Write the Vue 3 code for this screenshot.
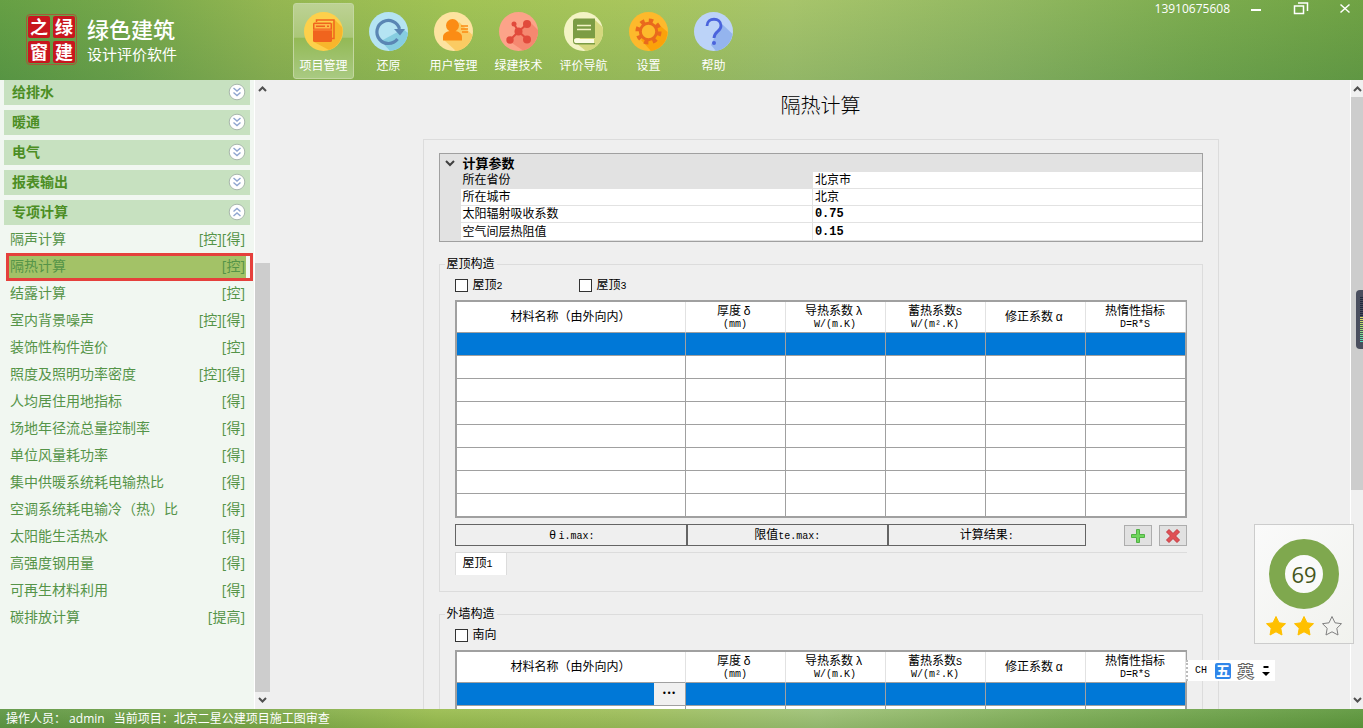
<script setup>
import { ref } from 'vue'

const tools = [
  { id: 'project', label: '项目管理' },
  { id: 'restore', label: '还原' },
  { id: 'user', label: '用户管理' },
  { id: 'tech', label: '绿建技术' },
  { id: 'guide', label: '评价导航' },
  { id: 'settings', label: '设置' },
  { id: 'help', label: '帮助' },
]
const activeTool = ref('project')

const groups = [
  { name: '给排水', open: false },
  { name: '暖通', open: false },
  { name: '电气', open: false },
  { name: '报表输出', open: false },
  { name: '专项计算', open: true },
]

const items = [
  { name: '隔声计算', tag: '[控][得]' },
  { name: '隔热计算', tag: '[控]' },
  { name: '结露计算', tag: '[控]' },
  { name: '室内背景噪声', tag: '[控][得]' },
  { name: '装饰性构件造价', tag: '[控]' },
  { name: '照度及照明功率密度', tag: '[控][得]' },
  { name: '人均居住用地指标', tag: '[得]' },
  { name: '场地年径流总量控制率', tag: '[得]' },
  { name: '单位风量耗功率', tag: '[得]' },
  { name: '集中供暖系统耗电输热比', tag: '[得]' },
  { name: '空调系统耗电输冷（热）比', tag: '[得]' },
  { name: '太阳能生活热水', tag: '[得]' },
  { name: '高强度钢用量', tag: '[得]' },
  { name: '可再生材料利用', tag: '[得]' },
  { name: '碳排放计算', tag: '[提高]' },
]
const activeItem = ref('隔热计算')

const params = [
  { name: '所在省份', value: '北京市' },
  { name: '所在城市', value: '北京' },
  { name: '太阳辐射吸收系数', value: '0.75', numeric: true },
  { name: '空气间层热阻值', value: '0.15', numeric: true },
]

const sections = [
  {
    title: '屋顶构造',
    checks: [{ text: '屋顶', no: '2' }, { text: '屋顶', no: '3' }],
    tab: { text: '屋顶', no: '1' },
    picker: false,
  },
  { title: '外墙构造', checks: [{ text: '南向', no: '' }], tab: null, picker: true },
]
</script>

<template>
  <div class="app">
    <header class="top">
      <div class="brand">
        <div class="stamp"><span>之</span><span>绿</span><span>窗</span><span>建</span></div>
        <div class="brand-text">
          <strong>绿色建筑</strong>
          <em>设计评价软件</em>
        </div>
      </div>

      <nav class="tools">
        <button
          v-for="t in tools"
          :key="t.id"
          type="button"
          class="tool"
          :class="{ active: t.id === activeTool }"
          @click="activeTool = t.id"
        >
          <svg v-if="t.id === 'project'" viewBox="0 0 39 39">
            <circle cx="19.5" cy="19.5" r="19.5" fill="#fdd04b" />
            <path d="M31 8 L38 15 A19.5 19.5 0 0 1 25 38 L10 30 Z" fill="#f8b62c" />
            <path d="M12.500 10V8H30V26.500H28" fill="none" stroke="#f0641e" stroke-width="1.500" />
            <rect x="9" y="10.500" width="19" height="19.500" rx="1.500" fill="#f0641e" />
            <rect x="10.500" y="12" width="16" height="4.500" fill="#fdbb48" />
            <path d="M12 14.300h9M23 14.300h2" stroke="#f0641e" stroke-width="1.500" />
            <path d="M9 18h19" stroke="#fb8a3a" />
          </svg>
          <svg v-else-if="t.id === 'restore'" viewBox="0 0 39 39">
            <circle cx="19.5" cy="19.5" r="19.5" fill="#b5e4f3" />
            <path d="M34 17 L39 21 A19.5 19.500 0 0 1 21 39 L12 29 Z" fill="#86cde0" />
            <path d="M28.500 27A11.500 11.500 0 1 1 30.500 17" fill="none" stroke="#5a86b4" stroke-width="3.200" />
            <path d="M25 17H36L31 23.500Z" fill="#5a86b4" />
          </svg>
          <svg v-else-if="t.id === 'user'" viewBox="0 0 39 39">
            <circle cx="19.5" cy="19.5" r="19.5" fill="#fde3a0" />
            <path d="M25 10 L38.500 23 A19.500 19.500 0 0 1 22 39 L10 28 Z" fill="#fbcb63" />
            <circle cx="18.500" cy="13.500" r="6.500" fill="#fb8c14" />
            <path d="M9 28.500V25c0-4 4-5.500 7-6h5c3 .5 7 2 7 6v3.500Z" fill="#fb8c14" />
            <path d="M27 14h7M27 17h7M28 20h6" stroke="#fb8c14" stroke-width="1.300" />
          </svg>
          <svg v-else-if="t.id === 'tech'" viewBox="0 0 39 39">
            <circle cx="19.5" cy="19.5" r="19.5" fill="#fca389" />
            <path d="M30 9 L39 18 A19.500 19.500 0 0 1 24 38.500 L10 29 Z" fill="#f58870" />
            <path d="M11 28 19.500 19.500 28 12M15 12l4.500 7.500L28 27" fill="none" stroke="#e14a3c" stroke-width="2" />
            <circle cx="19.500" cy="19.500" r="4" fill="#e14a3c" />
            <circle cx="11" cy="28" r="3.700" fill="#e14a3c" />
            <circle cx="28" cy="12" r="4" fill="#e14a3c" />
            <circle cx="28" cy="27.500" r="4" fill="#e14a3c" />
            <circle cx="15" cy="12" r="2.500" fill="#e14a3c" />
          </svg>
          <svg v-else-if="t.id === 'guide'" viewBox="0 0 39 39">
            <circle cx="19.5" cy="19.5" r="19.5" fill="#f3f3c4" />
            <path d="M31 8 L38.500 15 A19.500 19.500 0 0 1 22 39 L12 31 Z" fill="#d5d87e" />
            <path d="M9 9.500A3 3 0 0 1 12 6.500H31V26H12.500a2.500 2.500 0 0 0 0 5H31v1.500H12A3.500 3.500 0 0 1 9 29Z" fill="#7c9c44" />
            <path d="M11 27h19v4H12c-2 0-2-4-1-4" fill="#fbfbe4" />
            <path d="M13 13.500h14M13 17.500h14" stroke="#f3f3c4" stroke-width="1.300" />
          </svg>
          <svg v-else-if="t.id === 'settings'" viewBox="0 0 39 39">
            <circle cx="19.5" cy="19.5" r="19.5" fill="#fdb92c" />
            <path d="M28 11 L38.500 20 A19.500 19.500 0 0 1 22 39 L12 28 Z" fill="#fba20a" />
            <circle cx="19.500" cy="19.500" r="10.800" fill="none" stroke="#e9691d" stroke-width="4.500" stroke-dasharray="4.240 4.240" />
            <circle cx="19.500" cy="19.500" r="8.200" fill="#fdb92c" stroke="#e9691d" stroke-width="3" />
          </svg>
          <svg v-else viewBox="0 0 39 39">
            <circle cx="19.5" cy="19.5" r="19.5" fill="#bcd3f8" />
            <path d="M27 11 L38.500 22 A19.500 19.500 0 0 1 22 39 L17 33 Z" fill="#94b4ee" />
            <path d="M13 14c0-9 14-9 14 0 0 5.500-7 5.500-7 12" fill="none" stroke="#4a63dc" stroke-width="2.800" />
            <circle cx="20" cy="31" r="2" fill="#4a63dc" />
          </svg>
          <span>{{ t.label }}</span>
        </button>
      </nav>

      <div class="window">
        <span>13910675608</span>
        <button type="button" aria-label="最小化">
          <svg viewBox="0 0 16 16"><path d="M2 10h10" stroke="#fff" stroke-width="2" /></svg>
        </button>
        <button type="button" aria-label="还原窗口">
          <svg viewBox="0 0 16 16"><path d="M1.500 6h9v7.500h-9zM5 3h9.500V11" fill="none" stroke="#fff" stroke-width="1.500" /></svg>
        </button>
        <button type="button" aria-label="关闭">
          <svg viewBox="0 0 16 16"><path d="M3.500 4.500l9 8M12.500 4.500l-9 8" stroke="#fff" stroke-width="1.500" /></svg>
        </button>
      </div>
    </header>

    <div class="body">
      <aside class="side">
        <button v-for="g in groups" :key="g.name" type="button" class="group" :aria-expanded="g.open">
          <span>{{ g.name }}</span>
          <svg viewBox="0 0 18 18">
            <circle cx="9" cy="9" r="7.800" fill="#fff" stroke="#a9b8ad" />
            <path v-if="g.open" d="M5.500 8.500 9 5.500l3.500 3M5.500 13 9 10l3.500 3" fill="none" stroke="#8fa6d0" stroke-width="1.400" />
            <path v-else d="M5.500 5 9 8l3.500-3M5.500 9.500 9 12.500l3.500-3" fill="none" stroke="#8fa6d0" stroke-width="1.400" />
          </svg>
        </button>
        <ul class="items">
          <li v-for="i in items" :key="i.name">
            <a href="#" :class="{ selected: i.name === activeItem }" @click.prevent="activeItem = i.name">
              <span>{{ i.name }}</span><span>{{ i.tag }}</span>
            </a>
          </li>
        </ul>
      </aside>

      <div class="scroll" aria-hidden="true">
        <svg viewBox="0 0 9 6"><path d="M1 5l3.500-3.500L8 5" /></svg>
        <div class="track side-track"><div class="thumb"></div></div>
        <svg viewBox="0 0 9 6"><path d="M1 1l3.500 3.500L8 1" /></svg>
      </div>

      <main class="main">
        <h1>隔热计算</h1>
        <div class="panel">
          <table class="params">
            <colgroup>
              <col class="c-gutter" /><col /><col class="c-value" />
            </colgroup>
            <thead>
              <tr>
                <th class="gutter"><svg viewBox="0 0 10 8"><path d="M1 2l4 4 4-4" /></svg></th>
                <th colspan="2">计算参数</th>
              </tr>
            </thead>
            <tbody>
              <tr v-for="(p, n) in params" :key="p.name" :class="{ current: n === 0 }">
                <td class="gutter"></td>
                <td class="name">{{ p.name }}</td>
                <td :class="{ numeric: p.numeric }">{{ p.value }}</td>
              </tr>
            </tbody>
          </table>

          <fieldset v-for="s in sections" :key="s.title">
            <legend>{{ s.title }}</legend>
            <div class="checks">
              <label v-for="c in s.checks" :key="c.no">
                <input type="checkbox" /><span>{{ c.text }}<i class="lat">{{ c.no }}</i></span>
              </label>
            </div>
            <table class="layers">
              <colgroup>
                <col /><col v-for="c in 5" :key="c" class="num" />
              </colgroup>
              <thead>
                <tr>
                  <th>材料名称（由外向内）</th>
                  <th>厚度<i class="greek">δ</i><br /><i class="lat">(mm)</i></th>
                  <th>导热系数<i class="greek">λ</i><br /><i class="lat">W/(m.K)</i></th>
                  <th>蓄热系数<i class="lat">S</i><br /><i class="lat">W/(m².K)</i></th>
                  <th>修正系数<i class="greek">α</i></th>
                  <th>热惰性指标<br /><i class="lat">D=R*S</i></th>
                </tr>
              </thead>
              <tbody>
                <tr v-for="r in 8" :key="r" :class="{ current: r === 1 }">
                  <td><button v-if="s.picker && r === 1" type="button" class="pick" aria-label="选择材料">•••</button></td>
                  <td v-for="c in 5" :key="c"></td>
                </tr>
              </tbody>
            </table>
            <div v-if="s.tab" class="results">
              <div class="r1"><i class="greek">θ</i><i class="lat">i.max:</i></div>
              <div class="r2">限值<i class="lat">te.max:</i></div>
              <div class="r3">计算结果<i class="lat">:</i></div>
              <button type="button" class="add" aria-label="添加">
                <svg viewBox="0 0 16 16"><path d="M6.500 1.500h3v5h5v3h-5v5h-3v-5h-5v-3h5z" fill="#6fd65c" stroke="#52b046" /></svg>
              </button>
              <button type="button" aria-label="删除">
                <svg viewBox="0 0 16 16"><path d="M4 1.500 8 5.500l4-4L14.500 4l-4 4 4 4-2.500 2.500-4-4-4 4L1.500 12l4-4-4-4z" fill="#e05055" stroke="#c4383e" /></svg>
              </button>
            </div>
            <div v-if="s.tab" class="tabs">
              <button type="button">{{ s.tab.text }}<i class="lat">{{ s.tab.no }}</i></button>
            </div>
          </fieldset>
        </div>
      </main>

      <div class="scroll outer" aria-hidden="true">
        <svg viewBox="0 0 9 6"><path d="M1 5l3.500-3.500L8 5" /></svg>
        <div class="track"><div class="thumb"></div></div>
        <svg viewBox="0 0 9 6"><path d="M1 1l3.500 3.500L8 1" /></svg>
      </div>

      <div class="meter" aria-hidden="true"><div></div></div>

      <div class="score">
        <div class="ring"><span>69</span></div>
        <div class="stars">
          <svg v-for="n in 3" :key="n" viewBox="0 0 22 22" :class="{ empty: n === 3 }">
            <path d="M11 1.500 14 7.800 20.500 8.700 15.800 13.300 17 20 11 16.800 5 20 6.200 13.300 1.500 8.700 8 7.800Z" stroke-linejoin="round" />
          </svg>
        </div>
      </div>

      <div class="ime">
        <i class="lat">CH</i><b>五</b><span>英</span>
        <svg viewBox="0 0 8 12"><path d="M1.500 1h5v2h-5zM0 7h8L4 11z" /></svg>
      </div>
    </div>

    <footer class="status">
      <span>操作人员： admin</span>
      <span>当前项目：北京二星公建项目施工图审查</span>
    </footer>
  </div>
</template>

<style>
html,
body {
  margin: 0;
  overflow: hidden;
}
</style>

<style scoped>
* {
  box-sizing: border-box;
}
.app {
  display: flex;
  flex-direction: column;
  height: 100vh;
  background: #efefef;
  color: #000;
  font: 12px/16px 'Open Sans', 'Noto Sans CJK SC', sans-serif;
}
button {
  margin: 0;
  padding: 0;
  border: 0;
  background: none;
  color: inherit;
  font: inherit;
}
svg {
  display: block;
  flex: none;
}
i {
  font-style: normal;
}
.lat {
  font-family: 'Liberation Mono', monospace;
  font-size: 10px;
}
.greek {
  display: inline-block;
  width: 12px;
  text-align: center;
  font-family: 'Liberation Mono', monospace;
}

/* header */
.top {
  display: flex;
  flex: none;
  height: 80px;
  background: linear-gradient(rgba(190, 215, 100, 0.12), rgba(70, 130, 80, 0.18)),
    linear-gradient(92deg, #5a9840 0%, #6ca147 9%, #8fb24f 20%, #9dc052 33%, #a6c35b 46%, #a4c26c 58%, #8bb360 74%, #73a64b 88%, #659b40 100%);
  color: #fff;
}
.brand {
  display: flex;
  gap: 10px;
  width: 293px;
  padding: 14px 0 0 26px;
}
.stamp {
  display: grid;
  grid-template-columns: 22px 22px;
  gap: 3px;
  width: 51px;
  height: 51px;
  padding: 1px;
  border: 1px solid #a45a38;
  border-radius: 4px;
}
.stamp span {
  background: #c8161e;
  border-radius: 2px;
  text-align: center;
  font-size: 18px;
  font-weight: 700;
  line-height: 22px;
}
.brand-text {
  display: flex;
  flex-direction: column;
}
.brand-text strong {
  font-size: 22px;
  font-weight: 500;
  line-height: 30px;
}
.brand-text em {
  font-size: 15px;
  font-style: normal;
  line-height: 20px;
}
.tools {
  display: flex;
  flex: 1;
  gap: 4px;
  padding-top: 3px;
}
.tool {
  display: flex;
  flex-direction: column;
  align-items: center;
  width: 61px;
  height: 76px;
  padding-top: 8px;
  border: 1px solid transparent;
  border-radius: 3px;
}
.tool.active {
  border-color: #c3d7a0;
  background: linear-gradient(#bdd294, #abc778 45%, #93b955 46%, #a9ca82);
}
.tool svg {
  width: 39px;
  height: 39px;
}
.tool span {
  margin-top: 7px;
  white-space: nowrap;
}
.window {
  display: flex;
  align-items: flex-start;
  padding-right: 10px;
}
.window span {
  margin-right: 19px;
  line-height: 18px;
}
.window button + button {
  margin-left: 28px;
}
.window svg {
  width: 16px;
  height: 16px;
}

/* body */
.body {
  position: relative;
  display: flex;
  flex: 1;
  min-height: 0;
}
.side {
  width: 254px;
  padding: 0 4px;
  background: #f1f7f1;
  overflow: hidden;
}
.group {
  display: flex;
  align-items: center;
  justify-content: space-between;
  width: 100%;
  height: 25px;
  margin-bottom: 5px;
  padding: 0 4px 1px 8px;
  background: #c7e1c0;
  color: #4c8e24;
  font-size: 14px;
  font-weight: 700;
}
.group:last-of-type {
  margin-bottom: 0;
}
.group svg {
  width: 18px;
  height: 18px;
}
.items {
  margin: 0;
  padding: 0;
  list-style: none;
}
.items li {
  height: 27px;
  padding: 1px 4px 1px 5px;
}
.items a {
  position: relative;
  display: flex;
  justify-content: space-between;
  padding: 0 1px;
  color: #559448;
  font-size: 14px;
  line-height: 25px;
  text-decoration: none;
}
.items a.selected {
  background: #a3c267;
}
.items a.selected::after {
  content: '';
  position: absolute;
  inset: 0 -7px -3px -3px;
  border: 3px solid #e5403c;
}
.scroll {
  display: flex;
  flex: none;
  flex-direction: column;
  align-items: center;
  width: 16px;
  padding: 6px 0;
  border-left: 1px solid #fff;
  background: #f0f0f0;
}
.scroll svg {
  width: 9px;
  height: 6px;
  fill: none;
  stroke: #505050;
  stroke-width: 2;
}
.track {
  display: flex;
  flex: 1;
  flex-direction: column;
  align-self: stretch;
  margin: 5px 0;
}
.thumb {
  flex: 393;
  background: #cdcdcd;
}
.track::after {
  content: '';
  flex: 202;
}
.side-track::before {
  content: '';
  flex: 166;
}
.side-track .thumb {
  flex: 429;
}
.side-track::after {
  display: none;
}
.outer {
  width: 13px;
}

.main {
  flex: 1;
  min-width: 0;
  padding: 12px 0 0 21px;
  overflow: hidden;
}
h1 {
  margin: 0 0 19px;
  font-size: 20px;
  font-weight: 300;
  line-height: 28px;
  text-align: center;
}
.panel {
  max-width: 796px;
  margin: 0 auto;
  padding: 13px 15px;
  border: 1px solid #dcdcdc;
}
.params {
  width: 100%;
  border: 1px solid #a0a0a0;
  border-collapse: separate;
  border-spacing: 0;
  table-layout: fixed;
  background: #fff;
  line-height: 16px;
  text-align: left;
}
.c-gutter {
  width: 21px;
}
.c-value {
  width: 51%;
}
.params th,
.params td {
  height: 17px;
  padding: 0 2px;
}
.params th {
  height: 18px;
  padding-bottom: 1px;
  background: #e2e2e2;
  font-size: 13px;
}
.params .gutter {
  padding: 0 5px;
  border: 0;
  background: #e2e2e2;
}
.gutter svg {
  width: 10px;
  height: 8px;
  fill: none;
  stroke: #404040;
  stroke-width: 2;
}
.params td {
  border-bottom: 1px solid #e2e2e2;
}
.params tr:last-child td {
  height: 18px;
}
.params .name {
  border-right: 1px solid #e2e2e2;
}
.params .current .name {
  background: #e2e2e2;
}
.params .numeric {
  font-family: 'Liberation Mono', monospace;
  font-weight: 700;
}
fieldset {
  min-width: 0;
  margin: 13px 0 0;
  padding: 0 15px 16px;
  border: 1px solid #dcdcdc;
}
legend {
  margin-left: -10px;
  padding: 0 2px;
  line-height: 18px;
}
.checks {
  display: flex;
  height: 13px;
  margin: 6px 0 8px;
}
.checks label {
  display: flex;
  align-items: center;
  gap: 5px;
  width: 124px;
}
.checks input {
  width: 13px;
  height: 13px;
  margin: 0;
  border: 1px solid #333;
  background: #fff;
  appearance: none;
}
.layers {
  width: 100%;
  border: solid #a0a0a0;
  border-width: 2px 1px 1px 2px;
  border-collapse: separate;
  border-spacing: 0;
  table-layout: fixed;
  background: #fff;
}
.num {
  width: 100px;
}
.layers th,
.layers td {
  padding: 0;
  border-right: 1px solid #a0a0a0;
  border-bottom: 1px solid #a0a0a0;
}
.layers th {
  height: 31px;
  border-right-color: #e2e2e2;
  font-weight: 400;
  line-height: 12px;
}
.layers th i {
  line-height: 0;
}
.layers td {
  height: 23px;
}
.layers .current td {
  background: #0078d7;
}
.pick {
  display: block;
  width: 31px;
  height: 22px;
  margin-left: auto;
  background: #f0f0f0;
  font-family: 'DejaVu Sans', sans-serif;
  font-size: 8px;
}
.results {
  display: flex;
  height: 22px;
  margin: 6px 0;
}
.results div {
  border: 1px solid #646464;
  line-height: 20px;
  text-align: center;
}
.results .r1 {
  flex: 232;
}
.results .r2 {
  flex: 201;
}
.results .r3 {
  flex: 197;
}
.results button {
  display: flex;
  align-items: center;
  justify-content: center;
  width: 28px;
  height: 21px;
  margin: 1px 0 0 7px;
  border: 1px solid #adadad;
  background: #e1e1e1;
}
.results .add {
  margin-left: 38px;
}
.results svg {
  width: 16px;
  height: 16px;
}
.tabs {
  border-top: 1px solid #dcdcdc;
}
.tabs button {
  display: block;
  width: 52px;
  height: 22px;
  padding-left: 7px;
  border: 1px solid #dcdcdc;
  border-width: 0 1px;
  background: #fff;
  text-align: left;
}

/* floating widgets */
.meter {
  position: absolute;
  top: 210px;
  right: 0;
  width: 7px;
  height: 59px;
  padding: 7px 0 7px 4px;
  border-radius: 4px 0 0 4px;
  background: #4a4e5e;
}
.meter div {
  height: 100%;
  background: repeating-linear-gradient(transparent 0 1px, #4a4e5e 1px 2px),
    linear-gradient(#20283c 0 42%, #e0e060 43%, #a0e070 70%, #50e0c0);
}
.score {
  position: absolute;
  right: 9px;
  bottom: 65px;
  display: flex;
  flex-direction: column;
  align-items: center;
  width: 100px;
  height: 120px;
  padding-top: 14px;
  border: 1px solid #ccc;
  background: linear-gradient(135deg, #fafafa, #f1f2ee);
}
.ring {
  display: flex;
  align-items: center;
  justify-content: center;
  width: 70px;
  height: 70px;
  border: 16px solid #7fa84e;
  border-radius: 50%;
  background: #fafafa;
  color: #45561b;
  font-size: 22px;
}
.stars {
  display: flex;
  gap: 6px;
  margin-top: 6px;
}
.stars svg {
  width: 22px;
  height: 22px;
  fill: #ffc000;
  stroke: #ffc000;
}
.stars .empty {
  fill: none;
  stroke: #808080;
}
.ime {
  position: absolute;
  right: 88px;
  bottom: 28px;
  display: flex;
  align-items: center;
  width: 89px;
  height: 21px;
  padding-left: 7px;
  border-left: 2px dotted #bbb;
  background: #fff;
}
.ime b {
  width: 16px;
  margin: 0 7px 0 8px;
  border-radius: 2px;
  background: #2f86ea;
  color: #fff;
  font-size: 14px;
  line-height: 16px;
  text-align: center;
}
.ime span {
  width: 16px;
  color: #fff;
  font-size: 15px;
  -webkit-text-stroke: 2px #666;
  paint-order: stroke fill;
}
.ime svg {
  width: 8px;
  height: 12px;
  margin-left: 8px;
}

.status {
  display: flex;
  flex: none;
  gap: 9px;
  height: 19px;
  padding-left: 6px;
  background: linear-gradient(rgba(255, 255, 255, 0.06), rgba(40, 90, 20, 0.12)),
    linear-gradient(92deg, #5f9745 0%, #7ba74a 18%, #9bbd50 32%, #a0bf5c 46%, #a0c278 60%, #7fae58 78%, #5f983e 100%);
  color: #fff;
  line-height: 19px;
}
</style>
